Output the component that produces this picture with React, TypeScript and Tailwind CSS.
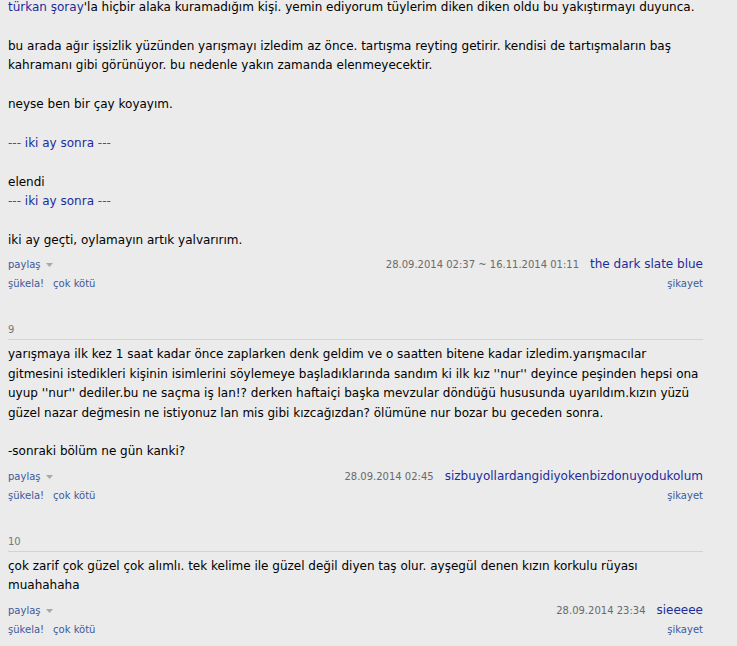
import { ReactNode } from "react";

type Entry = {
  no?: number;
  body: ReactNode;
  date: string;
  author: string;
};

const Link = ({ children }: { children: ReactNode }) => (
  <a href="#" className="text-[#1c2c9c]">
    {children}
  </a>
);

const Later = () => (
  <span className="text-[#555]">
    --- <Link>iki ay sonra</Link> ---
  </span>
);

const entries: Entry[] = [
  {
    body: (
      <>
        <Link>türkan şoray</Link>'la hiçbir alaka kuramadığım kişi. yemin ediyorum tüylerim diken diken oldu bu
        yakıştırmayı duyunca.
        <br />
        <br />
        bu arada ağır işsizlik yüzünden yarışmayı izledim az önce. tartışma reyting getirir. kendisi de tartışmaların baş
        kahramanı gibi görünüyor. bu nedenle yakın zamanda elenmeyecektir.
        <br />
        <br />
        neyse ben bir çay koyayım.
        <br />
        <br />
        <Later />
        <br />
        <br />
        elendi
        <br />
        <Later />
        <br />
        <br />
        iki ay geçti, oylamayın artık yalvarırım.
      </>
    ),
    date: "28.09.2014 02:37 ~ 16.11.2014 01:11",
    author: "the dark slate blue",
  },
  {
    no: 9,
    body: (
      <>
        yarışmaya ilk kez 1 saat kadar önce zaplarken denk geldim ve o saatten bitene kadar izledim.yarışmacılar
        gitmesini istedikleri kişinin isimlerini söylemeye başladıklarında sandım ki ilk kız ''nur'' deyince peşinden
        hepsi ona uyup ''nur'' dediler.bu ne saçma iş lan!? derken haftaiçi başka mevzular döndüğü hususunda
        uyarıldım.kızın yüzü güzel nazar değmesin ne istiyonuz lan mis gibi kızcağızdan? ölümüne nur bozar bu geceden
        sonra.
        <br />
        <br />
        -sonraki bölüm ne gün kanki?
      </>
    ),
    date: "28.09.2014 02:45",
    author: "sizbuyollardangidiyokenbizdonuyodukolum",
  },
  {
    no: 10,
    body: (
      <>
        çok zarif çok güzel çok alımlı. tek kelime ile güzel değil diyen taş olur. ayşegül denen kızın korkulu rüyası
        muahahaha
      </>
    ),
    date: "28.09.2014 23:34",
    author: "sieeeee",
  },
];

const EntryItem = ({ entry }: { entry: Entry }) => {
  return (
    <li className="flex flex-col">
      {entry.no && (
        <div className="mt-[29px] mb-[5px] border-b border-[#d3d3d3] pb-[1px] text-[10px] leading-[16px] text-[#777]">
          {entry.no}
        </div>
      )}
      <div className="text-[12px] leading-[19.4px] text-black">{entry.body}</div>
      <div className="mt-[5px] flex flex-col text-[10px] leading-[19px]">
        <div className="flex items-center justify-between">
          <a href="#" className="flex items-center gap-[5px] text-[#3b5a9c]">
            paylaş
            <svg width="7" height="4" viewBox="0 0 7 4" className="mt-[1px]">
              <path d="M0 0h7L3.5 4z" fill="#a8a8a8" />
            </svg>
          </a>
          <div className="flex items-center gap-[11px]">
            <span className="text-[#6a6a6a]">{entry.date}</span>
            <a href="#" className="text-[12px] text-[#1c2c9c]">
              {entry.author}
            </a>
          </div>
        </div>
        <div className="flex items-center justify-between text-[#3b5a9c]">
          <div className="flex gap-[9px]">
            <a href="#">şükela!</a>
            <a href="#">çok kötü</a>
          </div>
          <a href="#">şikayet</a>
        </div>
      </div>
    </li>
  );
};

export default function App() {
  return (
    <div
      className="h-[646px] w-full overflow-hidden bg-[#ebebeb]"
      style={{ fontFamily: '"DejaVu Sans", Verdana, sans-serif' }}
    >
      <ul className="-mt-[2px] ml-[8px] w-[695px]">
        {entries.map((entry, i) => (
          <EntryItem key={i} entry={entry} />
        ))}
      </ul>
    </div>
  );
}
